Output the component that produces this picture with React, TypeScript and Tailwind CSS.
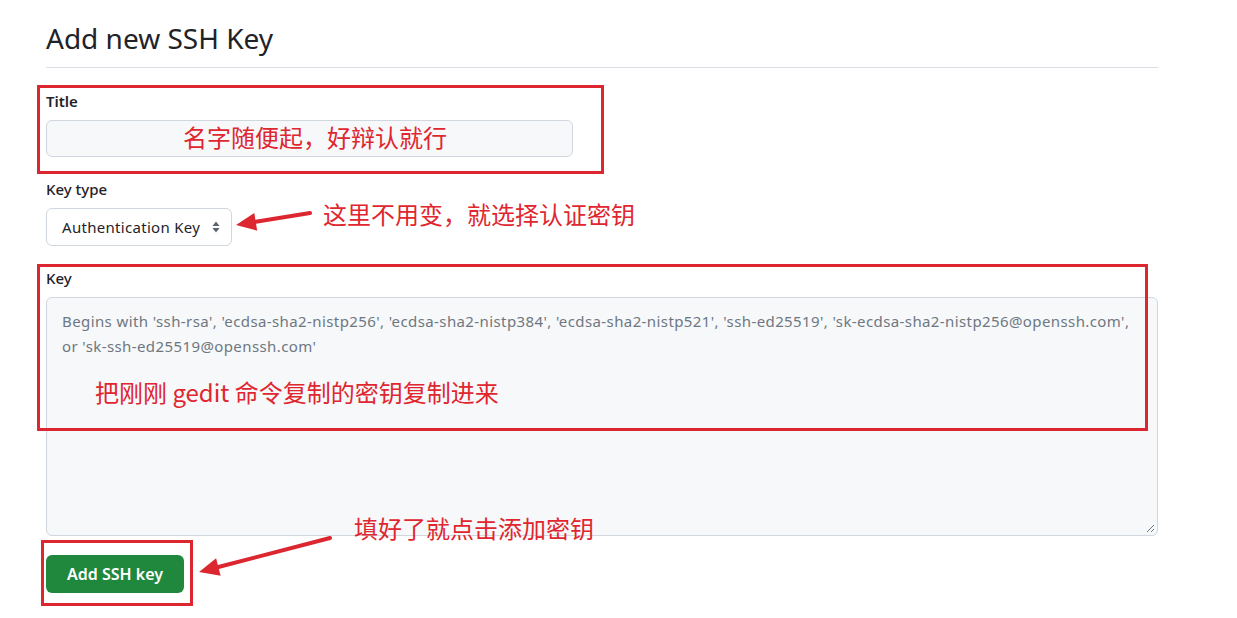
import React from "react";

const Arrow = ({ x1, y1, x2, y2 }: { x1: number; y1: number; x2: number; y2: number }) => {
    // line from tail (x1,y1) to tip (x2,y2) with a filled head
    const ang = Math.atan2(y2 - y1, x2 - x1);
    const len = 20;
    const wide = 9;
    const bx = x2 - Math.cos(ang) * len;
    const by = y2 - Math.sin(ang) * len;
    const px = -Math.sin(ang) * wide;
    const py = Math.cos(ang) * wide;
    return (
        <g>
            <line x1={x1} y1={y1} x2={bx} y2={by} stroke="#dc2630" strokeWidth={4} strokeLinecap="round" />
            <polygon points={`${x2},${y2} ${bx + px},${by + py} ${bx - px},${by - py}`} fill="#dc2630" />
        </g>
    );
};

const App = () => {
    const note = "absolute text-[24px] leading-none text-[#e0262e] font-['Microsoft_YaHei','Noto_Sans_CJK_SC',sans-serif] whitespace-nowrap";

    return (
        <div className="relative w-[1237px] h-[618px] overflow-hidden bg-white text-[#1f2328] font-['Noto_Sans','Noto_Sans_CJK_SC',sans-serif]">
            <div className="pl-[46px] w-[1158px]">
                <h2 className="pt-[18px] pb-[9px] border-b border-[#d8dee4] text-[28px] leading-[40px] font-normal">
                    Add new SSH Key
                </h2>

                <label className="block mt-[23px] text-[15px] leading-[20px] font-semibold">Title</label>
                <div className="mt-[9px] w-[527px] h-[37px] rounded-md border border-[#d0d7de] bg-[#f6f8fa]" />

                <label className="block mt-[22px] text-[15px] leading-[20px] font-medium">Key type</label>
                <div className="mt-[9px] w-[186px] h-[38px] rounded-md border border-[#d0d7de] bg-white flex items-center justify-between pl-[15px] pr-[11px]">
                    <span className="text-[15px] tracking-[0.3px] text-[#1f2328]">Authentication Key</span>
                    <svg width="8" height="12" viewBox="0 0 8 12">
                        <path d="M4 0.5 L7.5 5 H0.5 Z" fill="#59636e" />
                        <path d="M4 11.5 L7.5 7 H0.5 Z" fill="#59636e" />
                    </svg>
                </div>

                <label className="block mt-[22px] text-[15px] leading-[20px] font-medium">Key</label>
                <div className="relative mt-[9px] h-[239px] rounded-md border border-[#d0d7de] bg-[#f6f8fa] pl-[15px] pt-[11px] text-[15px] tracking-[0.4px] leading-[25px] text-[#6e7781]">
                    <div className="whitespace-nowrap">
                        Begins with 'ssh-rsa', 'ecdsa-sha2-nistp256', 'ecdsa-sha2-nistp384', 'ecdsa-sha2-nistp521', 'ssh-ed25519', 'sk-ecdsa-sha2-nistp256@openssh.com',
                    </div>
                    <div className="whitespace-nowrap">or 'sk-ssh-ed25519@openssh.com'</div>
                    <svg className="absolute right-[2px] bottom-[2px]" width="10" height="10" viewBox="0 0 10 10">
                        <path d="M9 2 L2 9 M9 6 L6 9" stroke="#6e7781" strokeWidth="1" />
                    </svg>
                </div>

                <button className="mt-[19px] w-[138px] h-[38px] rounded-md bg-[#1f883d] text-white text-[16px] font-semibold">
                    Add SSH key
                </button>
            </div>

            {/* annotations */}
            <div className="absolute left-[37px] top-[85px] w-[567px] h-[89px] border-[3px] border-[#dc2630]" />
            <div className="absolute left-[37px] top-[264px] w-[1111px] h-[167px] border-[3px] border-[#dc2630]" />
            <div className="absolute left-[41px] top-[540px] w-[152px] h-[66px] border-[3px] border-[#dc2630]" />

            <span className={`${note} left-[183px] top-[125px]`}>名字随便起，好辩认就行</span>
            <span className={`${note} left-[323px] top-[202px]`}>这里不用变，就选择认证密钥</span>
            <span className={`${note} left-[95px] top-[380px]`}>把刚刚 gedit 命令复制的密钥复制进来</span>
            <span className={`${note} left-[354px] top-[516px]`}>填好了就点击添加密钥</span>

            <svg className="absolute left-0 top-0 pointer-events-none" width="1237" height="618">
                <Arrow x1={310} y1={213} x2={236} y2={225} />
                <Arrow x1={330} y1={538} x2={199} y2={572} />
            </svg>
        </div>
    );
};

export default App;
